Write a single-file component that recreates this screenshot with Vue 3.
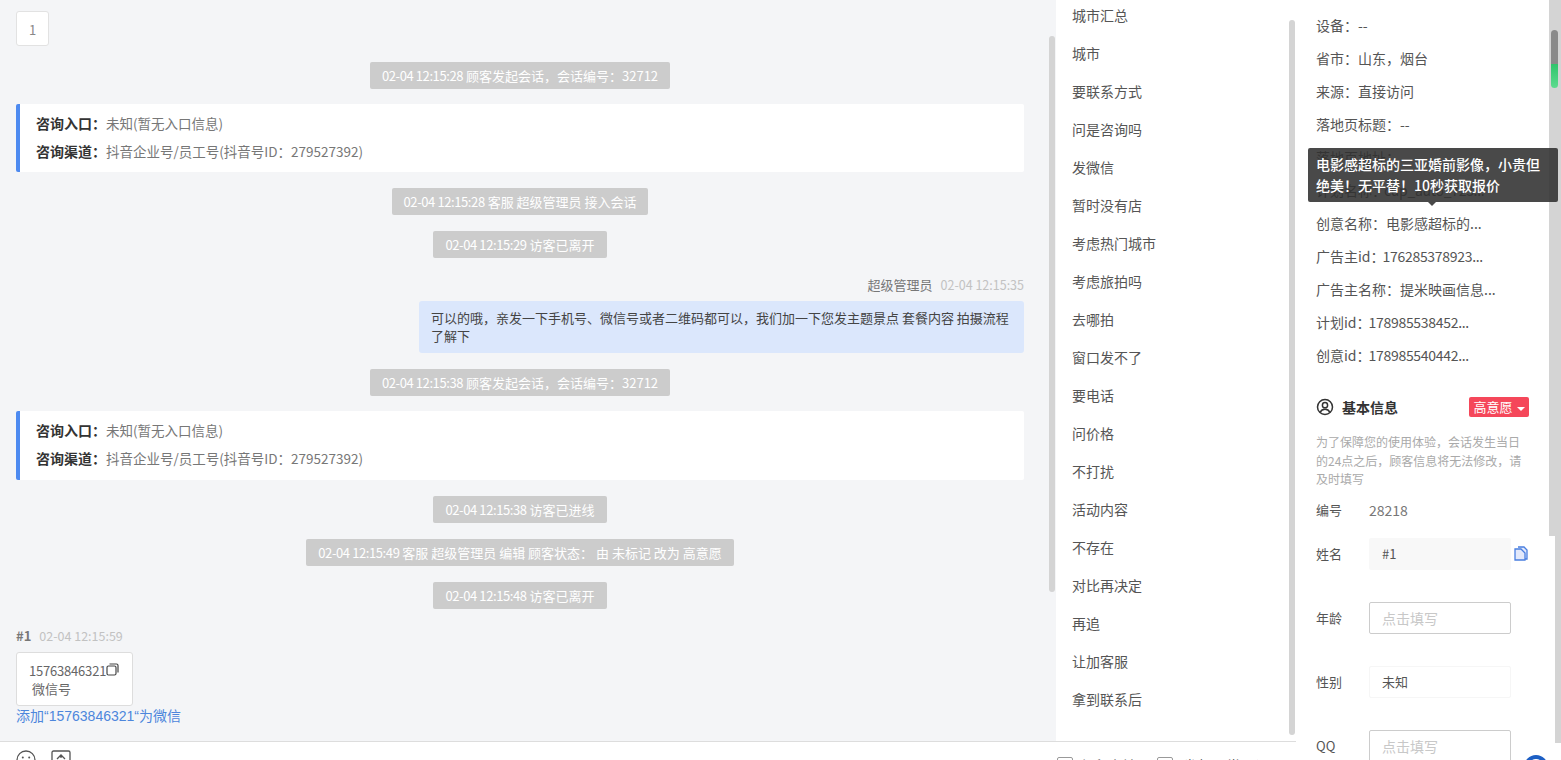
<template>
  <div class="page">
    <div class="main">
      <div class="top">
        <section class="chat">
          <div class="pager">1</div>

          <div class="sys"><span class="ts">02-04 12:15:28</span> 顾客发起会话，会话编号：32712</div>
          <div class="entry">
            <p><b>咨询入口：</b>未知(暂无入口信息)</p>
            <p><b>咨询渠道：</b>抖音企业号/员工号(抖音号ID：279527392)</p>
          </div>
          <div class="sys"><span class="ts">02-04 12:15:28</span> 客服 超级管理员 接入会话</div>
          <div class="sys"><span class="ts">02-04 12:15:29</span> 访客已离开</div>

          <div class="meta right">超级管理员<span>02-04 12:15:35</span></div>
          <div class="bubble">可以的哦，亲发一下手机号、微信号或者二维码都可以，我们加一下您发主题景点 套餐内容 拍摄流程了解下</div>

          <div class="sys"><span class="ts">02-04 12:15:38</span> 顾客发起会话，会话编号：32712</div>
          <div class="entry tall">
            <p><b>咨询入口：</b>未知(暂无入口信息)</p>
            <p><b>咨询渠道：</b>抖音企业号/员工号(抖音号ID：279527392)</p>
          </div>
          <div class="sys"><span class="ts">02-04 12:15:38</span> 访客已进线</div>
          <div class="sys"><span class="ts">02-04 12:15:49</span> 客服 超级管理员 编辑 顾客状态： 由 未标记 改为 高意愿</div>
          <div class="sys"><span class="ts">02-04 12:15:48</span> 访客已离开</div>

          <div class="meta"><b>#1</b><span>02-04 12:15:59</span></div>
          <div class="wechat">
            <div class="num">15763846321
              <svg width="13" height="13" viewBox="0 0 13 13" fill="none" stroke="#444" stroke-width="1.2">
                <rect x="1" y="3" width="9" height="9" rx="1.5" />
                <path d="M3.5 1h7a1.5 1.5 0 0 1 1.5 1.5v7" />
              </svg>
            </div>
            <div class="kind">微信号</div>
          </div>
          <a class="add">添加“15763846321“为微信</a>

          <div class="thumb chat-thumb"></div>
        </section>

        <aside class="quick">
          <div v-for="item in quickItems" :key="item" class="quick-item">{{ item }}</div>
          <div class="thumb quick-thumb"></div>
        </aside>
      </div>

      <div class="input-bar">
        <div class="tools">
          <svg width="20" height="20" viewBox="0 0 20 20" fill="none" stroke="#555" stroke-width="1.3">
            <circle cx="10" cy="10" r="9" />
            <circle cx="6.8" cy="7.5" r="1" fill="#555" stroke="none" />
            <circle cx="13.2" cy="7.5" r="1" fill="#555" stroke="none" />
          </svg>
          <svg width="20" height="20" viewBox="0 0 20 20" fill="none" stroke="#555" stroke-width="1.3">
            <rect x="1" y="1" width="18" height="18" rx="1.5" />
            <path d="M6 9l4-4 4 4M10 5v3" />
          </svg>
        </div>
        <div class="checks">
          <label><i></i>保留内转</label>
          <label class="wide"><i></i>发起图常用语</label>
        </div>
      </div>
    </div>

    <div class="side">
      <div class="panel">
        <div v-for="row in infoRows" :key="row.label" class="info-row">
          {{ row.label }}<span :class="{ digits: row.digits }">{{ row.value }}</span>
        </div>

        <div class="tooltip">电影感超标的三亚婚前影像，小贵但绝美！无平替！10秒获取报价</div>

        <div class="head">
          <svg width="18" height="18" viewBox="0 0 18 18" fill="none" stroke="#333" stroke-width="1.5">
            <circle cx="9" cy="9" r="7.5" />
            <circle cx="9" cy="7.2" r="2.6" />
            <path d="M4.2 14.2c1-2.2 2.8-3 4.8-3s3.8.8 4.8 3" />
          </svg>
          <strong>基本信息</strong>
          <span class="tag">高意愿<em></em></span>
        </div>
        <p class="note">为了保障您的使用体验，会话发生当日的24点之后，顾客信息将无法修改，请及时填写</p>

        <div class="field plain"><label>编号</label><span>28218</span></div>
        <div class="field">
          <label>姓名</label>
          <div class="box filled">#1</div>
          <svg class="copy" width="14" height="15" viewBox="0 0 14 15" fill="#e3e9fb" stroke="#4a7fe0" stroke-width="1.3">
            <path d="M4 1h6l3 3v9h-2" />
            <path d="M1 3h6l4 4v7H1z" />
          </svg>
        </div>
        <div class="field"><label>年龄</label><div class="box empty">点击填写</div></div>
        <div class="field"><label>性别</label><div class="box light">未知</div></div>
        <div class="field"><label>QQ</label><div class="box empty">点击填写</div></div>
      </div>

      <div class="rail">
        <div class="rail-top"><div class="rail-thumb"></div></div>
        <div class="rail-bottom"></div>
      </div>

      <div class="float-btn"><span></span></div>
    </div>
  </div>
</template>

<script setup>
const quickItems = [
  '城市汇总', '城市', '要联系方式', '问是咨询吗', '发微信', '暂时没有店', '考虑热门城市',
  '考虑旅拍吗', '去哪拍', '窗口发不了', '要电话', '问价格', '不打扰', '活动内容',
  '不存在', '对比再决定', '再追', '让加客服', '拿到联系后'
]

const infoRows = [
  { label: '设备：', value: '--' },
  { label: '省市：', value: '山东，烟台' },
  { label: '来源：', value: '直接访问' },
  { label: '落地页标题：', value: '--' },
  { label: '落地页地址：', value: '' },
  { label: '计划名称：', value: 'cup_auto_723...', digits: true },
  { label: '创意名称：', value: '电影感超标的...' },
  { label: '广告主id：', value: '176285378923...', digits: true },
  { label: '广告主名称：', value: '提米映画信息...' },
  { label: '计划id：', value: '178985538452...', digits: true },
  { label: '创意id：', value: '178985540442...', digits: true }
]
</script>

<style>
html, body { margin: 0; overflow: hidden; }
</style>

<style scoped>
.page {
  display: flex;
  width: 1561px;
  height: 760px;
  overflow: hidden;
  font-family: "Noto Sans CJK SC", "Noto Sans", sans-serif;
  font-size: 13px;
  color: #666;
  background: #fff;
}
.main { width: 1296px; display: flex; flex-direction: column; flex: none; }
.top { display: flex; height: 741px; flex: none; }

.chat {
  position: relative;
  width: 1056px;
  flex: none;
  box-sizing: border-box;
  padding: 11px 32px 0 16px;
  background: #f4f5f7;
  overflow: hidden;
}
.pager {
  width: 33px;
  height: 35px;
  line-height: 35px;
  box-sizing: border-box;
  border: 1px solid #e2e2e2;
  border-radius: 3px;
  background: #fff;
  text-align: center;
  color: #888;
  font-size: 13px;
}
.sys {
  width: fit-content;
  margin: 16px auto 0;
  padding: 0 12px;
  height: 27px;
  line-height: 27px;
  border-radius: 2px;
  background: #ccc;
  color: #fff;
  font-size: 13px;
  white-space: nowrap;
}
.ts { letter-spacing: -.4px; }
.entry {
  margin-top: 15px;
  padding: 6px 16px;
  height: 68px;
  box-sizing: border-box;
  background: #fff;
  border-left: 4px solid #4d8af0;
  border-radius: 2px;
  font-size: 13.5px;
  color: #777;
}
.entry.tall { height: 69px; }
.entry p { margin: 0; line-height: 27.5px; }
.entry b { color: #333; font-weight: 700; font-size: 14px; }
.meta {
  margin-top: 18px;
  height: 18px;
  line-height: 18px;
  font-size: 13px;
  color: #777;
}
.meta.right { text-align: right; }
.meta span { margin-left: 8px; color: #c2c2c2; font-size: 12.5px; }
.meta b { font-weight: 700; color: #777; }
.bubble {
  margin: 7px 0 0 auto;
  width: 605px;
  box-sizing: border-box;
  padding: 8px 12px;
  line-height: 18px;
  border-radius: 3px;
  background: #dbe7fc;
  color: #444;
  font-size: 13px;
}
.wechat {
  margin-top: 7px;
  width: 117px;
  height: 54px;
  box-sizing: border-box;
  padding: 9px 0 0 12px;
  background: #fff;
  border: 1px solid #ddd;
  border-radius: 3px;
  line-height: 18px;
  color: #666;
}
.num { display: flex; align-items: center; letter-spacing: -.2px; }
.num svg { margin-top: -3px; }
.kind { padding-left: 3px; }
.add {
  display: block;
  margin-top: 1px;
  line-height: 18px;
  color: #4d86dc;
  font-family: "Liberation Sans", "Noto Sans CJK SC", sans-serif;
  font-size: 14px;
}

.thumb { position: absolute; width: 6px; border-radius: 3px; background: #d4d4d4; }
.chat-thumb { right: 1px; top: 36px; height: 556px; }
.quick-thumb { right: 1px; top: 20px; height: 715px; }

.quick {
  position: relative;
  width: 240px;
  flex: none;
  box-sizing: border-box;
  padding-left: 16px;
  background: #fff;
  overflow: hidden;
}
.quick-item {
  height: 38px;
  line-height: 38px;
  color: #555;
  font-size: 14px;
  position: relative;
  top: -4px;
}

.input-bar {
  flex: 1;
  display: flex;
  border-top: 1px solid #ddd;
  box-sizing: border-box;
  overflow: hidden;
  background: #fff;
}
.tools { display: flex; gap: 15px; padding: 8px 0 0 16px; align-items: flex-start; }
.checks { margin-left: auto; display: flex; gap: 21px; padding: 15px 26px 0 0; color: #555; font-size: 14px; }
.checks label { display: flex; gap: 7px; line-height: 16px; }
.checks label.wide { gap: 10px; letter-spacing: .5px; }
.checks i { width: 14px; height: 14px; border: 1px solid #999; border-radius: 2px; display: block; }

.side { position: relative; flex: 1; display: flex; }
.panel {
  position: relative;
  width: 253px;
  flex: none;
  box-sizing: border-box;
  padding: 9px 0 0 20px;
  font-size: 14px;
  color: #555;
}
.info-row { height: 33px; line-height: 33px; white-space: nowrap; }
.digits { letter-spacing: -.3px; margin-left: -2px; }
.tooltip {
  position: absolute;
  z-index: 2;
  left: 12px;
  top: 148px;
  width: 250px;
  height: 54px;
  box-sizing: border-box;
  padding: 6px 8px;
  line-height: 21px;
  border-radius: 2px;
  background: rgba(48, 48, 48, .88);
  color: #fff;
  font-size: 14px;
  font-weight: 500;
}
.tooltip::after {
  content: "";
  position: absolute;
  left: 120px;
  top: 54px;
  border: 4px solid transparent;
  border-top-color: rgba(48, 48, 48, .88);
}
.head { display: flex; align-items: center; height: 22px; margin-top: 24px; width: 213px; }
.head strong { margin-left: 8px; color: #333; font-size: 14px; font-weight: 700; }
.tag {
  margin-left: auto;
  width: 60px;
  height: 20px;
  line-height: 20px;
  border-radius: 2px;
  background: #f5475a;
  color: #fff;
  font-size: 13px;
  text-align: center;
}
.tag em {
  display: inline-block;
  margin-left: 4px;
  vertical-align: 1px;
  border: 4px solid transparent;
  border-top: 4px solid #fff;
  border-bottom: 0;
}
.note { margin: 15px 0 0; width: 208px; font-size: 12px; line-height: 18.5px; color: #aaa; }
.field { display: flex; align-items: center; height: 32px; margin-bottom: 32px; font-size: 13px; }
.field label { width: 53px; flex: none; }
.field.plain { height: 20px; margin: 11px 0 18px; }
.field.plain span { color: #777; font-size: 14px; }
.box {
  width: 142px;
  height: 32px;
  line-height: 30px;
  box-sizing: border-box;
  padding: 0 12px;
  border: 1px solid transparent;
  border-radius: 2px;
}
.box.filled { background: #f8f8f8; }
.box.empty { border-color: #ccc; color: #c8c8c8; font-size: 14px; }
.box.light { border-color: #f6f6f6; }
.copy { margin-left: 3px; }

.rail { width: 12px; flex: none; display: flex; flex-direction: column; background: #fff; }
.rail-top { position: relative; height: 536px; background: #d4d4d4; }
.rail-bottom { height: 207px; margin-left: 6px; background: #d4d4d4; }
.rail-thumb {
  position: absolute;
  left: 2px;
  top: 30px;
  width: 7px;
  height: 58px;
  border-radius: 4px;
  background: linear-gradient(#8a8a8a 58%, #2fc46b 58%, #5ddb8e);
}
.float-btn {
  position: absolute;
  right: 0;
  top: 743px;
  width: 49px;
  height: 17px;
  border-radius: 6px 0 0 0;
  background: #fff;
  overflow: hidden;
}
.float-btn span {
  position: absolute;
  left: 12px;
  top: 12px;
  width: 24px;
  height: 24px;
  box-sizing: border-box;
  border-radius: 50%;
  border: 4px solid #1d5fc4;
}
</style>
